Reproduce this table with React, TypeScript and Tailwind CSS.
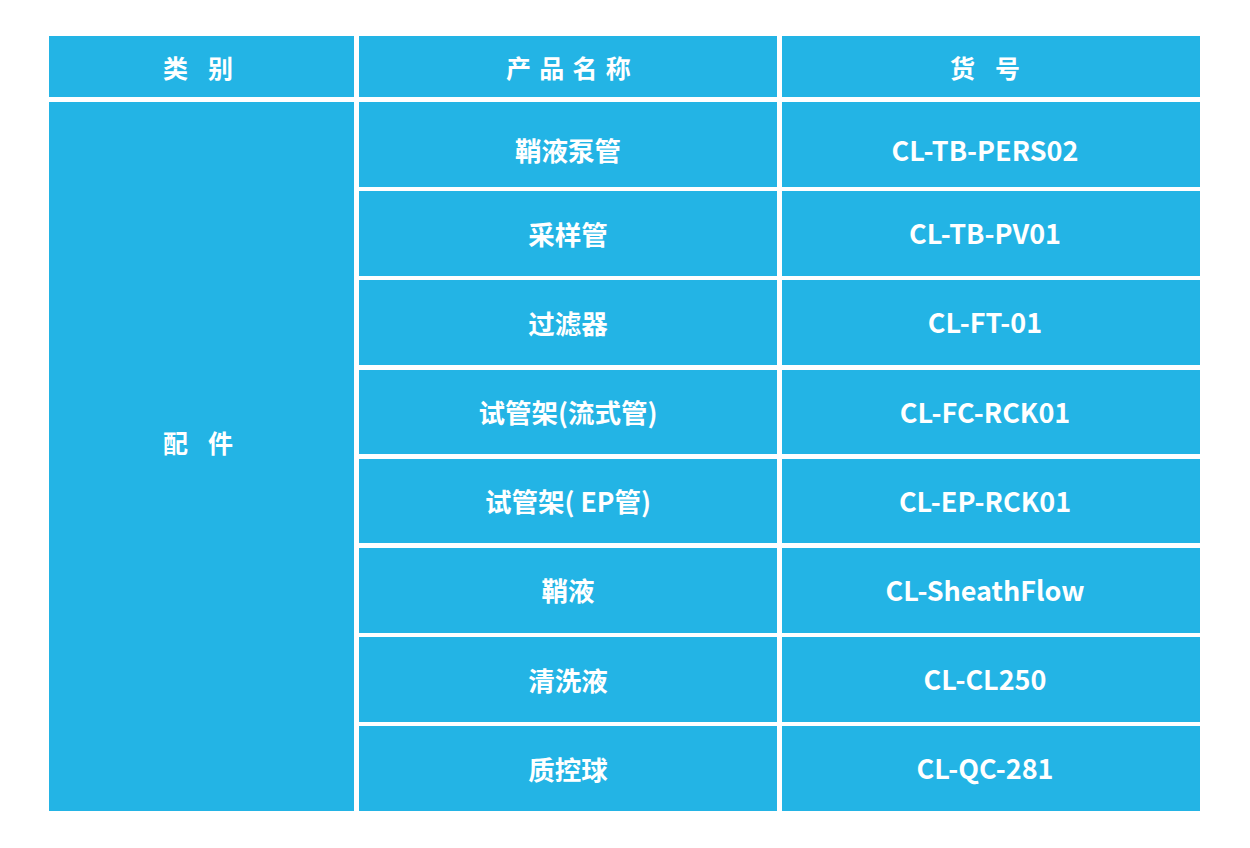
import React from "react";

const rows: [string, string][] = [
  ["鞘液泵管", "CL-TB-PERS02"],
  ["采样管", "CL-TB-PV01"],
  ["过滤器", "CL-FT-01"],
  ["试管架(流式管)", "CL-FC-RCK01"],
  ["试管架( EP管)", "CL-EP-RCK01"],
  ["鞘液", "CL-SheathFlow"],
  ["清洗液", "CL-CL250"],
  ["质控球", "CL-QC-281"],
];

const cell = "bg-[#23b4e5] text-white font-bold flex items-center justify-center";

export default function App() {
  return (
    <div
      className="w-[1250px] h-[848px] bg-white pt-[36px] pl-[49px]"
      style={{ fontFamily: '"Noto Sans CJK SC", "Noto Sans", sans-serif' }}
    >
      <div className="grid grid-cols-[305px_418px_418px] gap-x-[5px] w-[1151px]">
        <div className={`${cell} h-[61px] text-[25px] tracking-[20px] pl-[13px] pt-[3px]`}>类别</div>
        <div className={`${cell} h-[61px] text-[25px] tracking-[8.3px] pl-[9px] pt-[3px]`}>产品名称</div>
        <div className={`${cell} h-[61px] text-[25px] tracking-[20px] pl-[8px] pt-[3px]`}>货号</div>
      </div>
      <div className="grid grid-cols-[305px_846px] gap-x-[5px] w-[1156px] mt-[5px]">
        <div className={`${cell} h-[709px] text-[25px] tracking-[20px] pl-[13px] pb-[27px]`}>配件</div>
        <div className="grid grid-cols-[418px_418px] grid-rows-8 gap-x-[5px] gap-y-[4.5px] h-[709px]">
          {rows.map(([name, code], i) => (
            <React.Fragment key={code}>
              <div className={`${cell} text-[26.5px] ${i === 0 ? "pt-[11px]" : "pt-[0px]"}`}>{name}</div>
              <div className={`${cell} text-[27px] pr-[12px] ${i === 0 ? "pt-[11px]" : "pt-[0px]"}`}>{code}</div>
            </React.Fragment>
          ))}
        </div>
      </div>
    </div>
  );
}
